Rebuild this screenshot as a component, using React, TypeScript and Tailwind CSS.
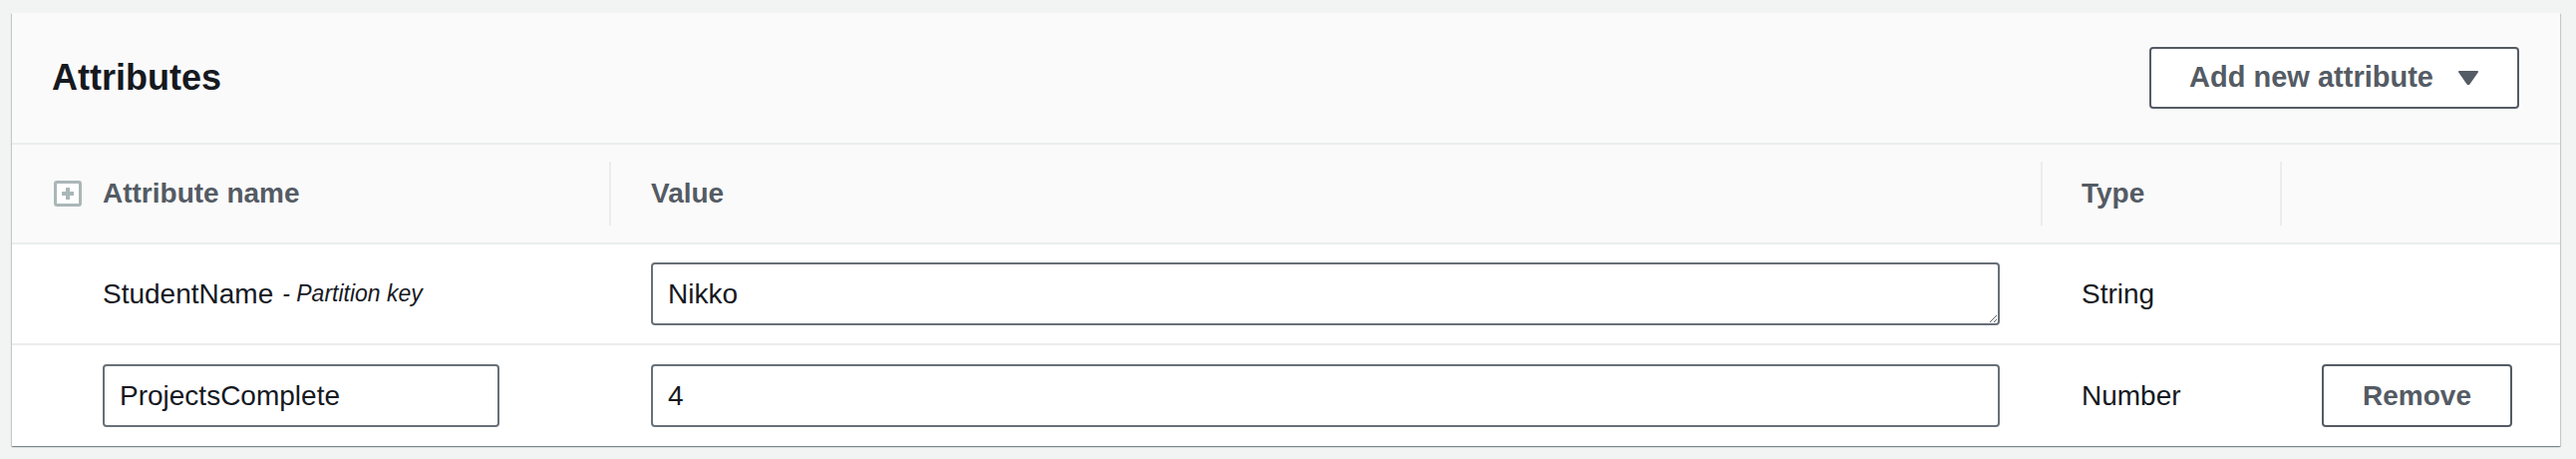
import React from 'react';

const PlusBox = () => (
    <svg width="28" height="26" viewBox="0 0 28 26" className="shrink-0">
        <rect x="1.5" y="1.5" width="25" height="23" rx="1.5" fill="#ffffff" stroke="#aab7b8" strokeWidth="3" />
        <rect x="8" y="11" width="12" height="4" fill="#aab7b8" />
        <rect x="12" y="7" width="4" height="12" fill="#aab7b8" />
    </svg>
);

const Divider = () => <div className="w-[2px] h-[64px] bg-[#eaeded] shrink-0" />;

export default function App() {
    const cols = 'grid grid-cols-[599px_1436px_240px_1fr]';

    return (
        <div className="h-[460px] bg-[#f2f3f3] pl-[12px] pr-[16px] pt-[13px] font-['Liberation_Sans',Arial,sans-serif] text-[#16191f]">
            <div className="bg-white shadow-[0_1px_1px_0_rgba(0,28,36,0.3),1px_1px_1px_0_rgba(0,28,36,0.15),-1px_1px_1px_0_rgba(0,28,36,0.15)]">
                {/* Panel header */}
                <div className="h-[132px] bg-[#fafafa] border-b-2 border-[#eaeded] flex items-center justify-between pl-[40px] pr-[41px]">
                    <h2 className="text-[36px] font-bold leading-none text-[#16191f]">Attributes</h2>
                    <button className="h-[62px] w-[371px] bg-white border-2 border-[#545b64] rounded-[4px] flex items-center justify-center gap-[24px] text-[29px] font-bold text-[#545b64]">
                        Add new attribute
                        <svg width="22" height="16" viewBox="0 0 22 16">
                            <path d="M2 1 H20 Q21.8 1 20.8 2.6 L12.4 14.4 Q11 16 9.6 14.4 L1.2 2.6 Q0.2 1 2 1 Z" fill="#545b64" />
                        </svg>
                    </button>
                </div>

                {/* Column headers */}
                <div className={`${cols} h-[100px] bg-[#fafafa] border-b-2 border-[#eaeded] text-[28px] font-bold text-[#545b64]`}>
                    <div className="flex items-center gap-[21px] pl-[42px]">
                        <PlusBox />
                        <span>Attribute name</span>
                    </div>
                    <div className="flex items-center">
                        <Divider />
                        <span className="pl-[40px]">Value</span>
                    </div>
                    <div className="flex items-center">
                        <Divider />
                        <span className="pl-[39px]">Type</span>
                    </div>
                    <div className="flex items-center">
                        <Divider />
                    </div>
                </div>

                {/* Row: partition key */}
                <div className={`${cols} h-[101px] border-b-2 border-[#eaeded] text-[28px]`}>
                    <div className="flex items-center pl-[91px]">
                        <span>StudentName</span>
                        <span className="ml-[9px] text-[23px] italic">- Partition key</span>
                    </div>
                    <div className="flex items-center pl-[42px] pr-[41px]">
                        <textarea
                            defaultValue="Nikko"
                            rows={1}
                            className="w-full h-[63px] border-2 border-[#687078] rounded-[4px] px-[15px] py-[12px] leading-[35px] text-[28px] text-[#16191f] bg-white outline-none"
                        />
                    </div>
                    <div className="flex items-center pl-[41px]">String</div>
                    <div />
                </div>

                {/* Row: added attribute */}
                <div className={`${cols} h-[101px] text-[28px]`}>
                    <div className="flex items-center pl-[91px]">
                        <input
                            defaultValue="ProjectsComplete"
                            className="w-[398px] h-[63px] border-2 border-[#687078] rounded-[4px] px-[15px] text-[28px] text-[#16191f] bg-white outline-none"
                        />
                    </div>
                    <div className="flex items-center pl-[42px] pr-[41px]">
                        <input
                            defaultValue="4"
                            className="w-full h-[63px] border-2 border-[#687078] rounded-[4px] px-[15px] text-[28px] text-[#16191f] bg-white outline-none"
                        />
                    </div>
                    <div className="flex items-center pl-[41px]">Number</div>
                    <div className="flex items-center pl-[42px]">
                        <button className="w-[191px] h-[63px] bg-white border-2 border-[#545b64] rounded-[4px] text-[28px] font-bold text-[#545b64]">
                            Remove
                        </button>
                    </div>
                </div>
            </div>
        </div>
    );
}
